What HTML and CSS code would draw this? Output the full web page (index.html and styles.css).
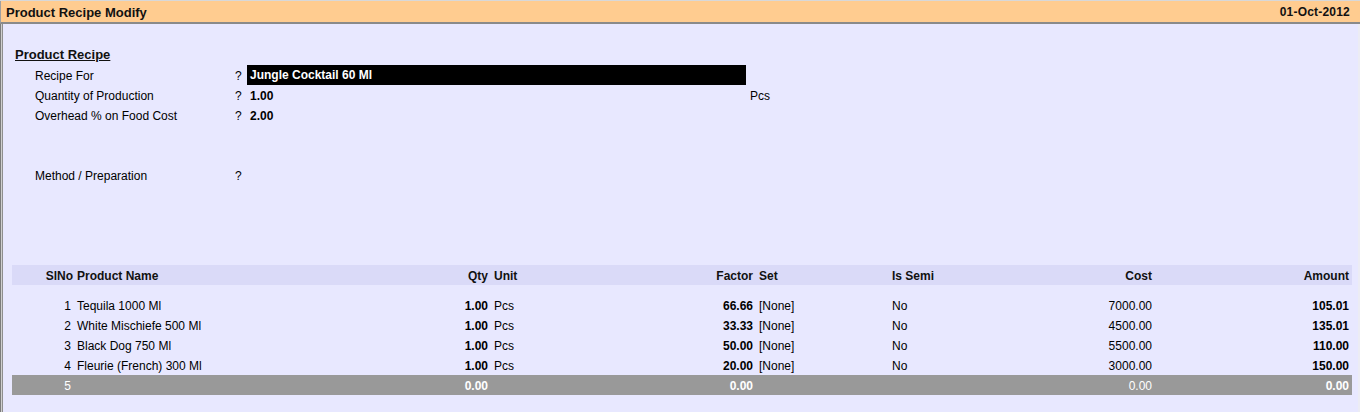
FILE: index.html
```html
<!DOCTYPE html>
<html>
<head>
<meta charset="utf-8">
<title>Product Recipe Modify</title>
<link rel="stylesheet" href="styles.css">
</head>
<body>
<div class="window">
  <div class="titlebar">
    <span class="title">Product Recipe Modify</span>
    <span class="date">01-Oct-2012</span>
  </div>
  <div class="main">
    <div class="section-title">Product Recipe</div>
    <div class="form">
      <div class="frow">
        <span class="label">Recipe For</span><span class="q">?</span><span class="value filled">Jungle Cocktail 60 Ml</span>
      </div>
      <div class="frow">
        <span class="label">Quantity of Production</span><span class="q">?</span><span class="value">1.00</span><span class="unit">Pcs</span>
      </div>
      <div class="frow">
        <span class="label">Overhead % on Food Cost</span><span class="q">?</span><span class="value">2.00</span>
      </div>
      <div class="frow spaced">
        <span class="label">Method / Preparation</span><span class="q">?</span><span class="value"></span>
      </div>
    </div>

    <div class="grid">
      <div class="trow head">
        <span class="r">SlNo</span><span>Product Name</span><span class="r">Qty</span><span>Unit</span><span class="r">Factor</span><span>Set</span><span>Is Semi</span><span class="r">Cost</span><span class="r">Amount</span>
      </div>
      <div class="spacer"></div>
      <div class="trow">
        <span class="r">1</span><span>Tequila 1000 Ml</span><span class="r b">1.00</span><span>Pcs</span><span class="r b">66.66</span><span>[None]</span><span>No</span><span class="r">7000.00</span><span class="r b">105.01</span>
      </div>
      <div class="trow">
        <span class="r">2</span><span>White Mischiefe 500 Ml</span><span class="r b">1.00</span><span>Pcs</span><span class="r b">33.33</span><span>[None]</span><span>No</span><span class="r">4500.00</span><span class="r b">135.01</span>
      </div>
      <div class="trow">
        <span class="r">3</span><span>Black Dog 750 Ml</span><span class="r b">1.00</span><span>Pcs</span><span class="r b">50.00</span><span>[None]</span><span>No</span><span class="r">5500.00</span><span class="r b">110.00</span>
      </div>
      <div class="trow">
        <span class="r">4</span><span>Fleurie (French) 300 Ml</span><span class="r b">1.00</span><span>Pcs</span><span class="r b">20.00</span><span>[None]</span><span>No</span><span class="r">3000.00</span><span class="r b">150.00</span>
      </div>
      <div class="trow total">
        <span class="r">5</span><span></span><span class="r b">0.00</span><span></span><span class="r b">0.00</span><span></span><span></span><span class="r">0.00</span><span class="r b">0.00</span>
      </div>
    </div>
  </div>
</div>
</body>
</html>
```

FILE: styles.css
```css
html, body {
  height: 100%;
}
body {
  margin: 0;
  background: #d8d8d8;
  font-family: "Liberation Sans", Arial, sans-serif;
  font-size: 12px;
  color: #000;
}
.window {
  display: flex;
  flex-direction: column;
  height: 100%;
  padding-top: 1px;
  box-sizing: border-box;
}
.titlebar {
  display: flex;
  justify-content: space-between;
  align-items: flex-start;
  box-sizing: border-box;
  height: 23px;
  padding: 2px 10px 0 5px;
  line-height: 19px;
  background: #ffcc90;
  border-left: 1px solid #a0a0a0;
  border-bottom: 2px solid #8a8a8a;
  font-weight: bold;
  font-size: 13px;
  color: #111;
  flex: none;
}
.date {
  font-size: 12px;
  letter-spacing: 0.2px;
}
.main {
  flex: 1;
  background: #e8e8ff;
  border-left: 1px solid #7c7c7c;
  border-right: 2px solid #ececf4;
  box-shadow: inset 1px 0 0 #cfcfcf, inset 2px 0 0 #8e8e8e;
  padding: 21px 0 0 14px;
}
.section-title {
  font-weight: bold;
  font-size: 13px;
  line-height: 20px;
  height: 20px;
  text-decoration: underline;
  color: #111;
}
.form {
  display: flex;
  flex-direction: column;
  padding-left: 20px;
}
.frow {
  display: flex;
  height: 20px;
  line-height: 22px;
}
.frow.spaced {
  margin-top: 40px;
}
.label {
  width: 200px;
  flex: none;
}
.q {
  width: 12px;
  flex: none;
}
.value {
  width: 499px;
  flex: none;
  box-sizing: border-box;
  padding-left: 3px;
  font-weight: bold;
}
.value.filled {
  background: #000;
  color: #fff;
  line-height: 20px;
}
.unit {
  margin-left: 4px;
}
.grid {
  margin-top: 80px;
  margin-left: -3px;
  width: 1340px;
}
.trow {
  display: grid;
  grid-template-columns: 62px 326px 91px 109px 156px 133px 111px 155px 197px;
  height: 20px;
  line-height: 22px;
}
.trow > span {
  padding: 0 3px;
  white-space: nowrap;
  overflow: hidden;
}
.trow .r {
  text-align: right;
}
.trow .b {
  font-weight: bold;
}
.trow.head {
  background: #dadaf8;
  font-weight: bold;
  color: #111;
}
.trow.head > span:first-child {
  padding-right: 1px;
}
.spacer {
  height: 10px;
}
.trow.total {
  background: #999999;
  color: #fff;
}
```
